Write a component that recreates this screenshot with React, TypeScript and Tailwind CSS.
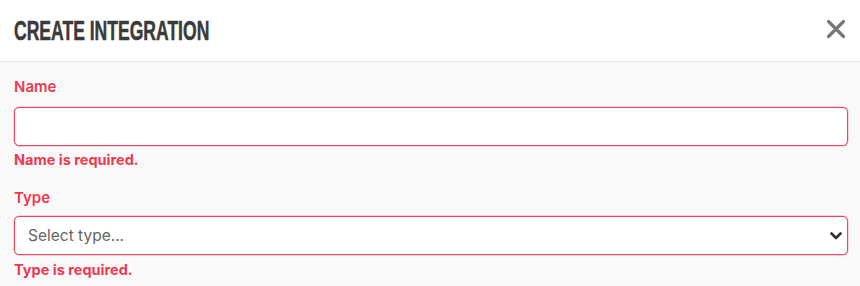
const App = () => {
  return (
    <div className="w-[860px] h-[286px] bg-[#f9f9f9] font-['Inter',sans-serif] overflow-hidden">
      <div className="h-[62px] bg-white border-b border-[#e4e4e4] flex items-center justify-between pl-[14px] pr-[14px]">
        <h2 className="font-['Liberation_Sans',sans-serif] font-bold text-[27px] leading-none text-[#3a3a3a] [-webkit-text-stroke:0.5px_#3a3a3a] inline-block origin-left scale-x-[0.65] whitespace-nowrap mt-[1px]">
          CREATE INTEGRATION
        </h2>
        <button type="button" className="text-[#777] mt-[-3px]">
          <svg width="20" height="20" viewBox="0 0 20 20" fill="none">
            <path
              d="M2.5 2.5 17.5 17.5M17.5 2.5 2.5 17.5"
              stroke="currentColor"
              strokeWidth="3.2"
              strokeLinecap="round"
            />
          </svg>
        </button>
      </div>
      <form className="pl-[14px] pr-[12px] pt-[15px]">
        <label className="block text-[15px] leading-5 font-semibold text-[#f0384f]">
          Name
        </label>
        <input
          type="text"
          className="mt-[10px] block w-full h-[39px] bg-white border border-[#f0465d] shadow-[0_0_0_0.5px_rgba(240,70,93,0.45)] rounded-[5px] outline-none px-3 text-[15px]"
        />
        <p className="mt-[6px] text-[14.5px] leading-4 font-bold text-[#f0384f]">
          Name is required.
        </p>
        <label className="block mt-5 text-[15px] leading-5 font-semibold text-[#f0384f]">
          Type
        </label>
        <div className="relative mt-2">
          <div className="h-[39px] w-full bg-white border border-[#f0465d] shadow-[0_0_0_0.5px_rgba(240,70,93,0.45)] rounded-[5px] flex items-center pl-[13px] pr-3 text-[15.5px] text-[#666]">
            Select type...
          </div>
          <svg
            width="12"
            height="8"
            viewBox="0 0 12 8"
            fill="none"
            className="absolute right-[6px] top-[16px] text-[#333]"
          >
            <path
              d="M1.5 1.5 6 6l4.5-4.5"
              stroke="currentColor"
              strokeWidth="2.6"
              strokeLinecap="round"
              strokeLinejoin="round"
            />
          </svg>
        </div>
        <p className="mt-[7px] text-[14.5px] leading-4 font-bold text-[#f0384f]">
          Type is required.
        </p>
      </form>
    </div>
  );
};

export default App;
